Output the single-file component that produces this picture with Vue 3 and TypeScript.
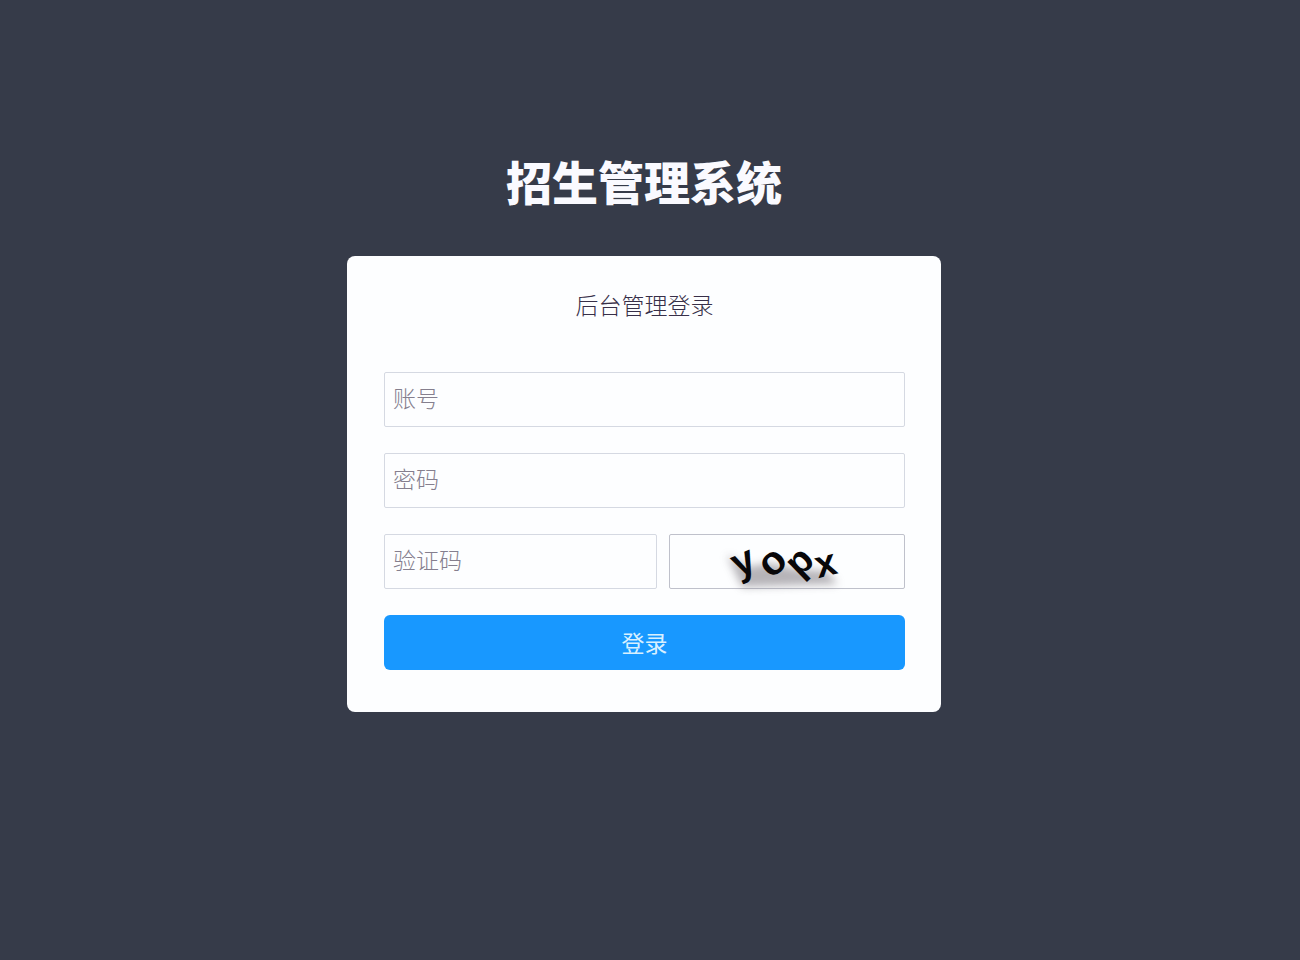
<script setup lang="ts">
import { reactive } from 'vue'

interface Glyph {
  char: string
  x: number
  y: number
  angle: number
  size: number
}

const form = reactive({ account: '', password: '', code: '' })

const glyphs: Glyph[] = [
  { char: 'y', x: 74, y: 39, angle: -24, size: 40 },
  { char: 'o', x: 104, y: 39, angle: -42, size: 40 },
  { char: 'p', x: 131, y: 38, angle: -44, size: 38 },
  { char: 'x', x: 156, y: 41, angle: -14, size: 38 },
]
</script>

<template>
  <main class="page">
    <h1 class="title">招生管理系统</h1>
    <form class="card" @submit.prevent>
      <h2 class="subtitle">后台管理登录</h2>
      <div class="fields">
        <input v-model="form.account" class="field" type="text" placeholder="账号" aria-label="账号" />
        <input v-model="form.password" class="field" type="password" placeholder="密码" aria-label="密码" />
        <div class="code-row">
          <input v-model="form.code" class="field" type="text" placeholder="验证码" aria-label="验证码" />
          <button class="captcha" type="button" aria-label="刷新验证码">
            <svg viewBox="0 0 234 53" width="234" height="53">
              <defs>
                <filter id="soft" x="-20%" y="-50%" width="140%" height="200%">
                  <feGaussianBlur stdDeviation="4" />
                </filter>
              </defs>
              <path d="M57 20 L72 52 L168 49 L156 36 L128 34 L98 28 L78 32 Z" fill="#6f6a72" opacity="0.5" filter="url(#soft)" />
              <text
                v-for="g in glyphs"
                :key="g.char"
                :x="g.x"
                :y="g.y"
                :font-size="g.size"
                :transform="`rotate(${g.angle} ${g.x} ${g.y - 10})`"
                text-anchor="middle"
                class="glyph"
              >{{ g.char }}</text>
            </svg>
          </button>
        </div>
        <button class="submit" type="submit">登录</button>
      </div>
    </form>
  </main>
</template>

<style>
body {
  margin: 0;
  background: #363b49;
}
</style>

<style scoped>
.page {
  box-sizing: border-box;
  min-height: 100vh;
  padding: 150px 12px 40px 0;
  display: flex;
  flex-direction: column;
  align-items: center;
  background: #363b49;
  font-family: "Liberation Sans", "Noto Sans CJK SC", sans-serif;
}

.title {
  margin: 0;
  font-size: 46px;
  line-height: 68px;
  font-weight: 900;
  color: #fafaff;
}

.card {
  box-sizing: border-box;
  width: 100%;
  max-width: 594px;
  margin-top: 38px;
  padding: 32px 36px 42px 37px;
  border-radius: 8px;
  background: #fdfeff;
}

.subtitle {
  margin: 0;
  font-size: 23px;
  line-height: 36px;
  font-weight: 300;
  text-align: center;
  color: #372f48;
}

.fields {
  display: flex;
  flex-direction: column;
  gap: 26px;
  margin-top: 48px;
}

.field {
  box-sizing: border-box;
  width: 100%;
  min-width: 0;
  height: 55px;
  padding: 0 8px;
  border: 1px solid #d5d9e2;
  border-radius: 2px;
  outline: none;
  background: #fdfeff;
  font-family: inherit;
  font-size: 23px;
  font-weight: 300;
  color: #372f48;
}

.field::placeholder {
  color: #857f8e;
  opacity: 1;
}

.code-row {
  display: grid;
  grid-template-columns: 273fr 236fr;
  gap: 12px;
}

.captcha {
  box-sizing: border-box;
  height: 55px;
  padding: 0;
  border: 1px solid #bfc1cb;
  border-radius: 2px;
  background: #fdfeff;
  display: flex;
  justify-content: center;
  cursor: pointer;
}

.captcha svg {
  overflow: visible;
}

.glyph {
  font-family: "Liberation Sans", sans-serif;
  font-weight: 700;
  fill: #080709;
}

.submit {
  height: 55px;
  padding: 0 0 2px;
  border: 0;
  border-radius: 6px;
  background: #1898ff;
  font-family: inherit;
  font-size: 23px;
  color: #d8f0ff;
  cursor: pointer;
}
</style>
